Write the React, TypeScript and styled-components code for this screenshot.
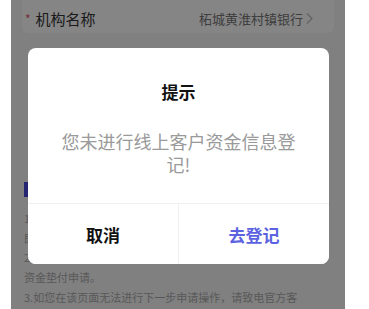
import styled, { createGlobalStyle } from "styled-components";

const GlobalStyle = createGlobalStyle`
  html, body {
    margin: 0;
    padding: 0;
    background: #ffffff;
    font-family: "Noto Sans CJK SC", "Noto Sans", sans-serif;
  }
`;

const Page = styled.div`
  display: flex;
  width: 369px;
  height: 309px;
  overflow: hidden;
  padding-left: 11px;
  box-sizing: border-box;
`;

const Phone = styled.div`
  position: relative;
  width: 334px;
  height: 309px;
  background: #f6f6f6;
  display: flex;
  flex-direction: column;
  overflow: hidden;
`;

const Card = styled.div`
  margin: -10px 11px 0;
  background: #ffffff;
  border-radius: 0 0 6px 6px;
  padding: 10px 20px 0 13px;
  height: 43px;
  box-sizing: border-box;
`;

const Row = styled.div`
  display: flex;
  align-items: center;
  justify-content: space-between;
  height: 36px;
`;

const Label = styled.div`
  display: flex;
  align-items: center;
  font-size: 15px;
  color: #333333;
`;

const Star = styled.span`
  color: #e05a6a;
  font-size: 12px;
  margin-right: 5px;
  margin-left: -10px;
`;

const Value = styled.div`
  display: flex;
  align-items: center;
  font-size: 13px;
  color: #777777;
`;

const Section = styled.div`
  padding: 0 13px;
  margin-top: 147px;
`;

const SectionTitle = styled.div`
  display: flex;
  align-items: center;
  gap: 8px;
  font-size: 14px;
  font-weight: 600;
  color: #333;
  height: 18px;
`;

const Bar = styled.span`
  width: 4px;
  height: 15px;
  background: #4848d8;
`;

const Notes = styled.div`
  margin-top: 11px;
  font-size: 11px;
  line-height: 19.7px;
  color: #aaaaaa;
`;

const NoteLine = styled.div`
  white-space: nowrap;
  overflow: hidden;
  width: 292px;
`;

const Overlay = styled.div`
  position: absolute;
  inset: 0;
  background: rgba(0, 0, 0, 0.48);
`;

const Dialog = styled.div`
  position: absolute;
  left: 17px;
  top: 48px;
  width: 301px;
  background: #ffffff;
  border-radius: 8px;
  overflow: hidden;
`;

const DialogBody = styled.div`
  padding: 32px 28px 27px;
  text-align: center;
`;

const Title = styled.div`
  font-size: 17px;
  font-weight: 700;
  line-height: 24px;
  color: #111;
`;

const Message = styled.div`
  margin-top: 26px;
  font-size: 18px;
  line-height: 23px;
  color: #9a9a9a;
`;

const Actions = styled.div`
  display: flex;
  border-top: 1px solid #f0f0f0;
  height: 60px;
`;

const Action = styled.button<{ $primary?: boolean }>`
  flex: 1;
  border: 0;
  background: #ffffff;
  font-family: inherit;
  font-size: 17px;
  font-weight: 600;
  color: ${(p) => (p.$primary ? "#5b63e0" : "#111111")};
  & + & {
    border-left: 1px solid #f0f0f0;
  }
`;

const notes = [
  "1.申请前请确认已完成线上客户资金信息登记，以免影响",
  "即时办理进度，未登记客户无法提交垫付申请。",
  "2.登记信息经审核通过后，方可在本页面提交客户",
  "资金垫付申请。",
  "3.如您在该页面无法进行下一步申请操作，请致电官方客",
];

export default function App() {
  return (
    <>
      <GlobalStyle />
      <Page>
        <Phone>
          <Card>
            <Row>
              <Label>
                <Star>*</Star>机构名称
              </Label>
              <Value>
                柘城黄淮村镇银行
                <svg width="9" height="13" viewBox="0 0 9 13" style={{ marginLeft: 2 }}>
                  <path d="M2 1.5 L7 6.5 L2 11.5" fill="none" stroke="#bbbbbb" strokeWidth="1.2" />
                </svg>
              </Value>
            </Row>
          </Card>
          <Section>
            <SectionTitle>
              <Bar />
              温馨提示
            </SectionTitle>
            <Notes>
              {notes.map((line) => (
                <NoteLine key={line}>{line}</NoteLine>
              ))}
            </Notes>
          </Section>
          <Overlay>
            <Dialog>
              <DialogBody>
                <Title>提示</Title>
                <Message>您未进行线上客户资金信息登记!</Message>
              </DialogBody>
              <Actions>
                <Action>取消</Action>
                <Action $primary>去登记</Action>
              </Actions>
            </Dialog>
          </Overlay>
        </Phone>
      </Page>
    </>
  );
}
